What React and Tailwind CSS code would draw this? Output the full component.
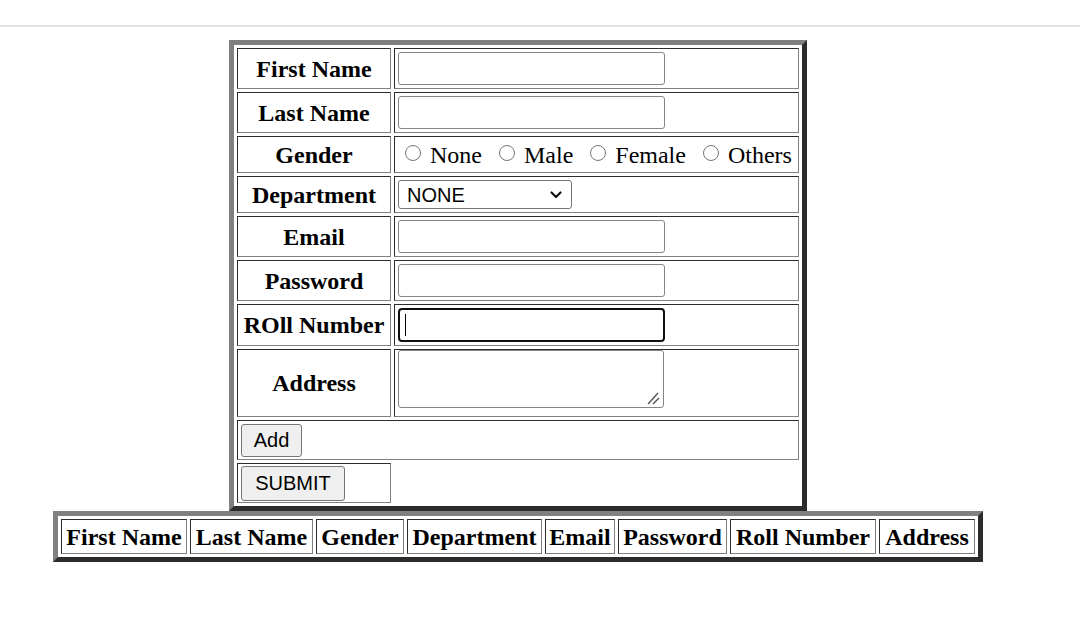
import React from "react";

const cell =
  "border border-t-[#2c2c2c] border-l-[#2c2c2c] border-b-[#808080] border-r-[#808080] p-[3px]";
const label =
  "border border-t-[#2c2c2c] border-l-[#2c2c2c] border-b-[#808080] border-r-[#808080] px-[3px] py-0 w-[154px] text-center align-middle font-bold text-[24px] leading-[28px] whitespace-nowrap text-black";
const valueCell =
  "border border-t-[#2c2c2c] border-l-[#2c2c2c] border-b-[#808080] border-r-[#808080] p-[3px] w-[405px] align-middle";

function TextInput() {
  return (
    <input
      type="text"
      readOnly
      className="block w-[267px] h-[33px] border border-[#858585] rounded-[3px] bg-white outline-none"
    />
  );
}

function Radio({ text, first }) {
  return (
    <div className={first ? "flex items-center" : "flex items-center ml-[17px]"}>
      <span className="w-[16px] h-[16px] rounded-full border border-[#767676] bg-white mr-[9px] mb-[3px] shrink-0" />
      <span className="text-[24px] leading-[28px] text-black">{text}</span>
    </div>
  );
}

const headers = [
  ["First Name", "w-[126px]"],
  ["Last Name", "w-[123px]"],
  ["Gender", "w-[88px]"],
  ["Department", "w-[135px]"],
  ["Email", "w-[70px]"],
  ["Password", "w-[109px]"],
  ["Roll Number", "w-[146px]"],
  ["Address", "w-[96px]"],
];

export default function App() {
  return (
    <div className="w-[1080px] min-h-[638px] bg-white font-['Liberation_Serif','Times_New_Roman',serif] text-black">
      <div className="h-[27px] border-b-2 border-[#e2e2e2]" />
      <div className="w-[1036px] flex flex-col items-center pt-[13px]">
        <table className="border-separate border-spacing-[3px] border-[5px] border-t-[#808080] border-l-[#808080] border-b-[#2c2c2c] border-r-[#2c2c2c]">
          <tbody>
            <tr>
              <td className={`${label} h-[41px]`}>First Name</td>
              <td className={`${valueCell} h-[41px]`}>
                <TextInput />
              </td>
            </tr>
            <tr>
              <td className={`${label} h-[41px]`}>Last Name</td>
              <td className={`${valueCell} h-[41px]`}>
                <TextInput />
              </td>
            </tr>
            <tr>
              <td className={`${label} h-[37px]`}>Gender</td>
              <td className={`${valueCell} h-[37px] py-0`}>
                <div className="flex items-center whitespace-nowrap pl-[7px]">
                  <Radio text="None" first />
                  <Radio text="Male" />
                  <Radio text="Female" />
                  <Radio text="Others" />
                </div>
              </td>
            </tr>
            <tr>
              <td className={`${label} h-[36px]`}>Department</td>
              <td className={`${valueCell} h-[36px]`}>
                <div className="flex items-center justify-between w-[174px] h-[29px] border border-[#767676] rounded-[3px] bg-white pl-[8px] pr-[9px] font-['Liberation_Sans',Arial,sans-serif] text-[20px] leading-[22px] text-black">
                  <span>NONE</span>
                  <svg width="12" height="8" viewBox="0 0 12 8" className="shrink-0">
                    <polyline points="1.5,1.5 6,6 10.5,1.5" fill="none" stroke="#111" strokeWidth="2.2" strokeLinecap="round" strokeLinejoin="round" />
                  </svg>
                </div>
              </td>
            </tr>
            <tr>
              <td className={`${label} h-[41px]`}>Email</td>
              <td className={`${valueCell} h-[41px]`}>
                <TextInput />
              </td>
            </tr>
            <tr>
              <td className={`${label} h-[41px]`}>Password</td>
              <td className={`${valueCell} h-[41px]`}>
                <TextInput />
              </td>
            </tr>
            <tr>
              <td className={`${label} h-[41px]`}>ROll Number</td>
              <td className={`${valueCell} h-[41px]`}>
                <div className="relative w-[267px] h-[34px] border-2 border-[#101010] rounded-[4px] bg-white">
                  <span className="absolute left-[5px] top-[4px] w-px h-[22px] bg-black" />
                </div>
              </td>
            </tr>
            <tr>
              <td className={`${label} h-[68px]`}>Address</td>
              <td className={`${valueCell} h-[68px] align-top pt-0`}>
                <div className="relative w-[266px] h-[58px]">
                  <textarea
                    readOnly
                    className="block w-[266px] h-[58px] border border-[#858585] rounded-[3px] bg-white resize-none outline-none"
                  />
                  <svg width="13" height="13" viewBox="0 0 13 13" className="absolute right-[4px] bottom-[3px]">
                    <line x1="1" y1="12" x2="11" y2="1" stroke="#555" strokeWidth="1.4" />
                    <line x1="6" y1="12" x2="12" y2="6" stroke="#555" strokeWidth="1.4" />
                  </svg>
                </div>
              </td>
            </tr>
            <tr>
              <td colSpan={2} className={`${cell} h-[40px] py-0 align-middle`}>
                <button className="flex items-center justify-center w-[61px] h-[33px] bg-[#efefef] border border-[#767676] rounded-[3px] font-['Liberation_Sans',Arial,sans-serif] text-[20px] leading-[22px] text-black">
                  Add
                </button>
              </td>
            </tr>
            <tr>
              <td className={`${cell} w-[154px] h-[40px] py-0 align-middle`}>
                <button className="flex items-center justify-center w-[104px] h-[35px] bg-[#efefef] border border-[#767676] rounded-[3px] font-['Liberation_Sans',Arial,sans-serif] text-[20px] leading-[22px] text-black">
                  SUBMIT
                </button>
              </td>
            </tr>
          </tbody>
        </table>

        <table className="border-separate border-spacing-[3px] border-[5px] border-t-[#808080] border-l-[#808080] border-b-[#2c2c2c] border-r-[#2c2c2c]">
          <thead>
            <tr>
              {headers.map(([h, w]) => (
                <th
                  key={h}
                  className={`${w} h-[35px] border border-t-[#2c2c2c] border-l-[#2c2c2c] border-b-[#808080] border-r-[#808080] p-0 text-center align-middle font-bold text-[24px] leading-[28px] whitespace-nowrap text-black`}
                >
                  {h}
                </th>
              ))}
            </tr>
          </thead>
        </table>
      </div>
    </div>
  );
}
